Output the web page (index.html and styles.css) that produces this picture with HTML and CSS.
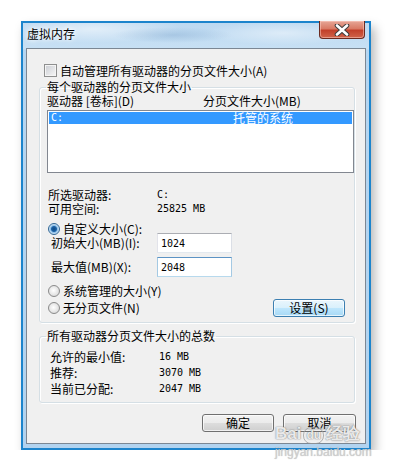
FILE: index.html
```html
<!DOCTYPE html>
<html>
<head>
    <meta charset="UTF-8">
    <meta name="viewport" content="width=device-width, initial-scale=1.0">
    <title>虚拟内存</title>
    <link rel="stylesheet" href="styles.css">
</head>
<body>
    <div class="window">
        <div class="titlebar">
            <span class="title">虚拟内存</span>
            <span class="close-btn">
                <svg width="16" height="12" viewBox="0 0 16 12">
                    <path d="M3 1.5 L13 10.5 M13 1.5 L3 10.5" stroke="#3c3c3c" stroke-width="4.6" stroke-linecap="round"/>
                    <path d="M3 1.5 L13 10.5 M13 1.5 L3 10.5" stroke="#ffffff" stroke-width="2.6" stroke-linecap="round"/>
                </svg>
            </span>
        </div>
        <div class="client">
            <label class="check-row"><input type="checkbox" class="check"><span>自动管理所有驱动器的分页文件大小(A)</span></label>

            <fieldset class="group group-drives">
                <legend>每个驱动器的分页文件大小</legend>
                <div class="list-head">
                    <span class="col-drive">驱动器 [卷标](D)</span>
                    <span class="col-size">分页文件大小(MB)</span>
                </div>
                <div class="listbox">
                    <div class="list-row selected">
                        <span class="col-drive mono">C:</span>
                        <span class="col-size">托管的系统</span>
                    </div>
                </div>
                <div class="info-row first">
                    <span class="info-label">所选驱动器:</span>
                    <span class="info-value mono">C:</span>
                </div>
                <div class="info-row">
                    <span class="info-label">可用空间:</span>
                    <span class="info-value mono">25825 MB</span>
                </div>
                <label class="radio-row custom"><input type="radio" name="mode" class="radio" checked><span>自定义大小(C):</span></label>
                <div class="size-row initial">
                    <label class="size-label" for="initial">初始大小(MB)(I):</label>
                    <input type="text" id="initial" class="size-input mono" value="1024">
                </div>
                <div class="size-row maximum">
                    <label class="size-label" for="maximum">最大值(MB)(X):</label>
                    <input type="text" id="maximum" class="size-input focused mono" value="2048">
                </div>
                <label class="radio-row system"><input type="radio" name="mode" class="radio"><span>系统管理的大小(Y)</span></label>
                <div class="last-row">
                    <label class="radio-row"><input type="radio" name="mode" class="radio"><span>无分页文件(N)</span></label>
                    <button type="button" class="btn btn-hot set-btn">设置(S)</button>
                </div>
            </fieldset>

            <fieldset class="group group-total">
                <legend>所有驱动器分页文件大小的总数</legend>
                <div class="total-row">
                    <span class="total-label">允许的最小值:</span>
                    <span class="mono">16 MB</span>
                </div>
                <div class="total-row">
                    <span class="total-label">推荐:</span>
                    <span class="mono">3070 MB</span>
                </div>
                <div class="total-row">
                    <span class="total-label">当前已分配:</span>
                    <span class="mono">2047 MB</span>
                </div>
            </fieldset>

            <div class="dialog-buttons">
                <button type="button" class="btn ok-btn">确定</button>
                <button type="button" class="btn cancel-btn">取消</button>
            </div>
        </div>
    </div>

    <div class="watermark">
        <div class="wm-logo">Bai<span class="wm-paw">du</span>经验</div>
        <div class="wm-url">jingyan.baidu.com</div>
    </div>
</body>
</html>
```

FILE: styles.css
```css
body {
    margin: 0;
    background: #ffffff;
    font-family: "Noto Sans CJK SC", "DejaVu Sans", sans-serif;
    font-size: 12px;
    line-height: 14px;
    color: #000;
}
.mono {
    font-family: "DejaVu Sans Mono", "Liberation Mono", monospace;
    font-size: 10px;
}

/* window frame */
.window {
    box-sizing: border-box;
    width: 350px;
    height: 429px;
    margin: 21px 0 0 21px;
    padding: 0 3px 4px 3px;
    border: 2px solid #1c84cc;
    background:
        radial-gradient(ellipse 60px 8px at 150px 12px, rgba(120, 160, 200, 0.35), transparent),
        radial-gradient(ellipse 90px 14px at 70px 6px, rgba(255, 255, 255, 0.55), transparent),
        radial-gradient(ellipse 80px 12px at 260px 10px, rgba(255, 255, 255, 0.45), transparent),
        linear-gradient(to bottom, #bdd9f1 0, #c7e0f4 26px, #b6d6f1 27px, #b2d3ef 100%);
    box-shadow: 4px 6px 10px rgba(0, 0, 0, 0.28);
}
.titlebar {
    display: flex;
    justify-content: space-between;
    align-items: flex-start;
    height: 25px;
    padding-left: 1px;
}
.title {
    padding-top: 4px;
    text-shadow: 0 0 4px #ffffff, 0 0 6px #ffffff;
}
.close-btn {
    box-sizing: border-box;
    display: flex;
    align-items: center;
    justify-content: center;
    width: 46px;
    height: 18px;
    margin: -2px 1px 0 0;
    border: 1px solid #6b2a20;
    border-top: none;
    border-radius: 0 0 4px 4px;
    background: linear-gradient(to bottom, #e6a696 0%, #d97a65 45%, #c2402a 55%, #d0644a 100%);
    box-shadow: inset 0 0 0 1px rgba(255, 210, 200, 0.5);
}

.client {
    box-sizing: border-box;
    height: 396px;
    padding: 15px 10px 0 12px;
    border: 1px solid #7b8794;
    background: #f0f0f0;
}

/* checkbox and radios */
.check-row {
    display: flex;
    align-items: center;
    height: 13px;
    margin-left: 5px;
    line-height: 13px;
}
.check {
    appearance: none;
    box-sizing: border-box;
    width: 13px;
    height: 13px;
    margin: 0 3px 0 0;
    border: 1px solid #8e8f8f;
    background: linear-gradient(135deg, #c9ccd2, #f7f7f7);
    box-shadow: inset 0 0 0 1px #f4f4f4;
}
.radio-row {
    display: flex;
    align-items: center;
    padding-left: 1px;
}
.radio {
    appearance: none;
    box-sizing: border-box;
    width: 12px;
    height: 12px;
    margin: 0 3px 0 0;
    border: 1px solid #8a8a8a;
    border-radius: 50%;
    background: radial-gradient(circle at 45% 45%, #ffffff 0, #e8e8e8 50%, #cfcfcf 100%);
}
.radio:checked {
    border-color: #2f6594;
    background: radial-gradient(circle, #0c4a86 0, #1d62a5 2.5px, #8dbfe8 3.5px, #d5e9f8 5px);
}

/* group boxes */
.group {
    margin: 3px 0 0 0;
    padding: 0 0 5px 7px;
    min-width: 0;
    border: 1px solid #d5dfe5;
    border-radius: 3px;
    box-shadow: inset 1px 1px 0 #ffffff, 1px 1px 0 #ffffff;
}
.group legend {
    padding: 0 1px;
    margin-left: -1px;
    line-height: 14px;
}
.list-head {
    display: flex;
    height: 14px;
}
.col-drive {
    width: 156px;
}
.listbox {
    box-sizing: border-box;
    height: 63px;
    margin-top: 2px;
    padding: 1px;
    border: 1px solid #828790;
    background: #ffffff;
}
.list-row {
    display: flex;
    align-items: center;
    height: 12px;
    line-height: 12px;
}
.list-row .col-drive {
    width: 182px;
    padding-left: 2px;
}
.list-row.selected {
    background: #3399ff;
    color: #ffffff;
}
.info-row {
    display: flex;
    align-items: center;
    height: 14px;
    padding-left: 1px;
}
.info-row.first {
    margin-top: 15px;
}
.info-label {
    width: 109px;
}
.radio-row.custom {
    height: 12px;
    margin-top: 7px;
}
.size-row {
    display: flex;
    align-items: center;
    height: 20px;
}
.size-row.initial {
    margin-top: -2px;
}
.size-row.maximum {
    margin-top: 4px;
}
.size-label {
    width: 106px;
    padding-left: 4px;
}
.size-input {
    box-sizing: border-box;
    width: 75px;
    height: 20px;
    margin: 0;
    padding: 0 3px;
    border: 1px solid;
    border-color: #abadb3 #dbdfe6 #e3e9ef #e2e3ea;
    background: #ffffff;
    color: #000;
    outline: none;
}
.size-input.focused {
    border-color: #5c93c4 #a4c9e3 #b7d9ed #a4c9e3;
}
.radio-row.system {
    height: 14px;
    margin-top: 7px;
}
.last-row {
    display: flex;
    align-items: center;
    height: 18px;
    margin-top: 1px;
}

/* buttons */
.btn {
    box-sizing: border-box;
    height: 18px;
    margin: 0;
    padding: 0;
    border: 1px solid #707070;
    border-radius: 3px;
    font-family: "Noto Sans CJK SC", sans-serif;
    font-size: 12px;
    line-height: 14px;
    color: #000;
    background: linear-gradient(to bottom, #f2f2f2 0%, #ebebeb 50%, #dddddd 51%, #cfcfcf 100%);
    box-shadow: inset 0 0 0 1px rgba(255, 255, 255, 0.7);
}
.btn-hot {
    border-color: #3c7fb1;
    background: linear-gradient(to bottom, #eaf6fd 0%, #d9f0fc 50%, #bee6fd 51%, #a7d9f5 100%);
}
.set-btn {
    width: 72px;
    margin: 0 9px 0 auto;
}

.group-total {
    margin-top: 6px;
    padding: 6px 0 5px 7px;
}
.total-row {
    display: flex;
    align-items: center;
    height: 16px;
    padding-left: 3px;
}
.total-label {
    width: 109px;
}

.dialog-buttons {
    display: flex;
    justify-content: flex-end;
    gap: 9px;
    margin: 11px -1px 0 0;
}
.ok-btn {
    width: 72px;
}
.cancel-btn {
    width: 73px;
}

/* site watermark over the screenshot */
.watermark {
    position: absolute;
    left: 275px;
    top: 424px;
    pointer-events: none;
}
.wm-logo {
    font-family: "Liberation Sans", Arial, sans-serif;
    font-weight: bold;
    font-size: 17px;
    line-height: 20px;
    color: rgba(255, 255, 255, 0.85);
    text-shadow: 0 0 1px rgba(90, 90, 90, 0.8), 0 0 2px rgba(120, 120, 120, 0.5);
}
.wm-paw {
    display: inline-block;
    margin: 0 2px;
    padding: 0 2px;
    border-radius: 8px;
    font-size: 12px;
    line-height: 15px;
    border: 1px solid rgba(150, 150, 150, 0.7);
}
.wm-url {
    margin-top: 1px;
    font-family: "Liberation Sans", Arial, sans-serif;
    font-size: 12px;
    line-height: 14px;
    color: #cfcfcf;
    text-shadow: 0 0 1px rgba(150, 150, 150, 0.6);
}
```
